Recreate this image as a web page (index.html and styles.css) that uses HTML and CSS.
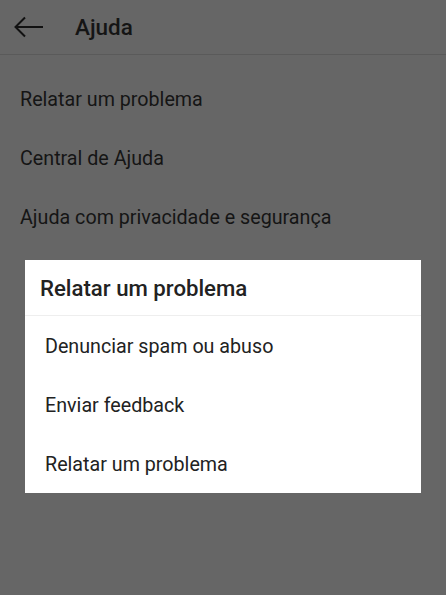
FILE: index.html
```html
<!DOCTYPE html>
<html>
<head lang="pt">
    <meta charset="UTF-8">
    <title>Ajuda</title>
    <link rel="stylesheet" href="styles.css">
</head>
<body>
    <div id="page">
        <div id="header">
            <svg class="back" width="30" height="22" viewBox="0 0 30 22">
                <path d="M29 11H2M11 1.5L1.5 11L11 20.5" fill="none" stroke="#111" stroke-width="2"/>
            </svg>
            <h1>Ajuda</h1>
        </div>
        <ul id="menu">
            <li>Relatar um problema</li>
            <li>Central de Ajuda</li>
            <li>Ajuda com privacidade e segurança</li>
        </ul>
    </div>

    <div id="overlay">
        <div id="dialog">
            <h2>Relatar um problema</h2>
            <ul>
                <li>Denunciar spam ou abuso</li>
                <li>Enviar feedback</li>
                <li>Relatar um problema</li>
            </ul>
        </div>
    </div>
</body>
</html>
```
FILE: styles.css
```css
*{
    margin: 0;
    padding: 0;
}
li{
    list-style: none;
}
html,body{
    height: 100%;
}
body{
    background: #666;
    font-family: Roboto, "Noto Sans", sans-serif;
    color: #151515;
}
#page{
    height: 100%;
}
#header{
    height: 54px;
    border-bottom: 1px solid #5a5a5a;
    display: flex;
    align-items: center;
    padding-left: 14px;
}
#header .back{
    margin-right: 31px;
}
#header h1{
    font-size: 22.5px;
    font-weight: 500;
}
#menu{
    padding-top: 11px;
}
#menu li{
    height: 59px;
    line-height: 68px;
    padding-left: 20px;
    font-size: 19.7px;
}
#overlay{
    position: absolute;
    top: 0;
    left: 0;
    right: 0;
    bottom: 0;
    display: flex;
    justify-content: center;
    align-items: flex-start;
    padding-top: 260px;
}
#dialog{
    width: 396px;
    background: #fff;
    color: #222;
}
#dialog h2{
    height: 55px;
    line-height: 56px;
    padding-left: 15px;
    font-size: 22.2px;
    font-weight: 500;
    border-bottom: 1px solid #eee;
}
#dialog li{
    height: 59px;
    line-height: 61px;
    padding-left: 20px;
    font-size: 19.7px;
}
```
